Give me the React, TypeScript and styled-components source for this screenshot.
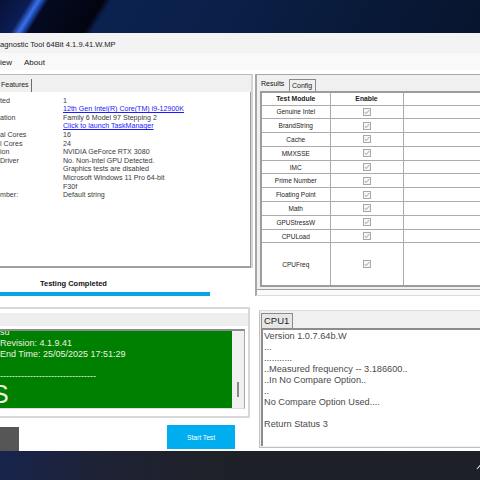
import styled, { createGlobalStyle } from "styled-components";

const GlobalStyle = createGlobalStyle`
  html, body {
    margin: 0;
    padding: 0;
  }
  body {
    width: 480px;
    height: 480px;
    overflow: hidden;
    font-family: "Liberation Sans", Arial, sans-serif;
    background: #1e2027;
  }
  * {
    box-sizing: border-box;
  }
`;

const info: { label: string; value: string; link?: boolean }[] = [
  { label: "ted", value: "1" },
  { label: "", value: "12th Gen Intel(R) Core(TM) i9-12900K", link: true },
  { label: "ation", value: "Family 6 Model 97 Stepping 2" },
  { label: "", value: "Click to launch  TaskManager", link: true },
  { label: "al Cores", value: "16" },
  { label: "l Cores", value: "24" },
  { label: "ion", value: "NVIDIA GeForce RTX 3080" },
  { label: "Driver", value: "No. Non-Intel GPU Detected." },
  { label: "", value: "Graphics tests are disabled" },
  { label: "", value: "Microsoft Windows 11 Pro 64-bit" },
  { label: "", value: "F30f" },
  { label: "mber:", value: "Default string" },
];

const modules = [
  "Genuine Intel",
  "BrandString",
  "Cache",
  "MMXSSE",
  "IMC",
  "Prime Number",
  "Floating Point",
  "Math",
  "GPUStressW",
  "CPULoad",
];

const cpuLog = [
  "Version 1.0.7.64b.W",
  "...",
  "...........",
  "..Measured frequency -- 3.186600..",
  "..In No Compare Option..",
  "..",
  "No Compare Option Used....",
  "\u00a0",
  "Return Status  3",
];

const CheckIcon = () => (
  <svg width="8" height="8" viewBox="0 0 8 8">
    <rect x="0.5" y="0.5" width="7" height="7" fill="#f6f6f6" stroke="#a8a8a8" />
    <polyline points="1.8,4 3.2,5.6 6.3,2" fill="none" stroke="#9a9a9a" strokeWidth="0.9" />
  </svg>
);

const App = () => {
  return (
    <Screen>
      <GlobalStyle />
      <Wallpaper />
      <Window>
        <TitleBar>agnostic Tool 64Bit 4.1.9.41.W.MP</TitleBar>
        <MenuBar>
          <MenuItem>iew</MenuItem>
          <MenuItem>About</MenuItem>
        </MenuBar>
        <Body>
          <LeftCol>
            <InfoPanel>
              <TabStrip>
                <Tab $w={32} $edge>
                  Features
                </Tab>
              </TabStrip>
              <InfoBody>
                <InfoGrid>
                  {info.map((row, i) => (
                    <InfoRow key={i}>
                      <span>{row.label}</span>
                      {row.link ? <InfoLink>{row.value}</InfoLink> : <span>{row.value}</span>}
                    </InfoRow>
                  ))}
                </InfoGrid>
              </InfoBody>
            </InfoPanel>
            <Status>
              <StatusText>Testing Completed</StatusText>
              <Progress />
            </Status>
            <LogBox>
              <LogHeader />
              <LogFrame>
                <GreenLog>
                  <LogLines>
                    <div>su</div>
                    <div>Revision: 4.1.9.41</div>
                    <div>End Time: 25/05/2025 17:51:29</div>
                    <div>&nbsp;</div>
                    <div>--------------------------------</div>
                  </LogLines>
                  <BigResult>S</BigResult>
                </GreenLog>
                <ScrollTrack>
                  <ScrollThumb />
                </ScrollTrack>
              </LogFrame>
            </LogBox>
            <ButtonRow>
              <DarkButton />
              <StartButton>Start Test</StartButton>
            </ButtonRow>
          </LeftCol>
          <RightCol>
            <ResultsPanel>
              <RTabStrip>
                <Tab $w={31} $active>
                  Results
                </Tab>
                <Tab $w={27} $boxed>
                  Config
                </Tab>
              </RTabStrip>
              <ResultsPage>
                <Table>
                  <colgroup>
                    <col style={{ width: 69 }} />
                    <col style={{ width: 73 }} />
                    <col style={{ width: 130 }} />
                  </colgroup>
                  <thead>
                    <tr>
                      <Th>Test Module</Th>
                      <Th>Enable</Th>
                      <Th />
                    </tr>
                  </thead>
                  <tbody>
                    {modules.map((m) => (
                      <Tr key={m}>
                        <Td>{m}</Td>
                        <Td>
                          <CheckIcon />
                        </Td>
                        <Td />
                      </Tr>
                    ))}
                    <Tr $tall>
                      <Td>CPUFreq</Td>
                      <Td>
                        <CheckIcon />
                      </Td>
                      <Td />
                    </Tr>
                  </tbody>
                </Table>
              </ResultsPage>
            </ResultsPanel>
            <CpuPanel>
              <CpuStrip>
                <CpuTab>CPU1</CpuTab>
              </CpuStrip>
              <CpuText>
                {cpuLog.map((l, i) => (
                  <div key={i}>{l}</div>
                ))}
              </CpuText>
            </CpuPanel>
          </RightCol>
        </Body>
      </Window>
      <Taskbar>
        <TrayChevron width="8" height="8" viewBox="0 0 8 8">
          <polyline points="1,6 4,2.5 7,6" fill="none" stroke="#e8e8e8" strokeWidth="1.1" />
        </TrayChevron>
      </Taskbar>
    </Screen>
  );
};

export default App;

const Screen = styled.div`
  width: 480px;
  height: 480px;
  display: flex;
  flex-direction: column;
  overflow: hidden;
`;

const Wallpaper = styled.div`
  height: 33px;
  flex-shrink: 0;
  background: linear-gradient(
    122deg,
    #081236 0px,
    #0c1c55 26px,
    #3a70ea 33px,
    #1d4bb5 36px,
    #050a22 41px,
    #02040f 88px,
    #0b2250 95px,
    #0b2048 200px,
    #091a3a 300px,
    #08152e 423px
  );
`;

const Window = styled.div`
  height: 418px;
  flex-shrink: 0;
  background: #ffffff;
  display: flex;
  flex-direction: column;
`;

const TitleBar = styled.div`
  height: 20px;
  background: #f3f3f3;
  display: flex;
  align-items: center;
  padding-top: 2px;
  font-size: 7.6px;
  color: #1a1a1a;
  white-space: nowrap;
`;

const MenuBar = styled.div`
  height: 17px;
  background: #f9f9f9;
  display: flex;
  align-items: center;
  gap: 12px;
  padding-top: 1px;
  font-size: 8px;
  color: #1a1a1a;
`;

const MenuItem = styled.span``;

const Body = styled.div`
  flex: 1;
  display: grid;
  grid-template-columns: 255px 225px;
  overflow: hidden;
`;

const LeftCol = styled.div`
  display: flex;
  flex-direction: column;
`;

const InfoPanel = styled.div`
  margin-top: 4px;
  height: 194px;
  width: 253px;
  border-top: 1px solid #b9b9b9;
  border-right: 2px solid #d4d4d4;
  background: #f0f0f0;
  display: flex;
  flex-direction: column;
`;

const TabStrip = styled.div`
  height: 17px;
  display: flex;
  align-items: flex-end;
`;

const Tab = styled.div<{ $w: number; $edge?: boolean; $active?: boolean; $boxed?: boolean }>`
  width: ${(p) => p.$w}px;
  height: 13px;
  font-size: 7px;
  line-height: 12px;
  padding-left: ${(p) => (p.$edge ? 1 : 3)}px;
  color: ${(p) => (p.$active ? "#111" : "#222")};
  white-space: nowrap;
  border-right: ${(p) => (p.$edge ? "1px solid #6e6e6e" : "none")};
  ${(p) =>
    p.$boxed &&
    `
    border: 1px solid #8a8a8a;
    border-bottom: none;
    height: 12px;
    line-height: 11px;
    padding-left: 2px;
  `}
`;

const InfoBody = styled.div`
  flex: 1;
  background: #ffffff;
  border-right: 1px solid #9a9a9a;
  border-bottom: 2px solid #a0a0a0;
`;

const InfoGrid = styled.div`
  padding-top: 4.7px;
  display: flex;
  flex-direction: column;
`;

const InfoRow = styled.div`
  display: grid;
  grid-template-columns: 63px 1fr;
  height: 8.6px;
  line-height: 8.6px;
  font-size: 7.1px;
  color: #3a3a3a;
  white-space: nowrap;
`;

const InfoLink = styled.span`
  color: #1a1aff;
  text-decoration: underline;
`;

const Status = styled.div`
  height: 39px;
  padding-top: 11px;
`;

const StatusText = styled.div`
  margin-left: 40px;
  font-size: 7.5px;
  line-height: 9px;
  font-weight: bold;
  color: #111;
`;

const Progress = styled.div`
  margin-top: 4px;
  width: 210px;
  height: 4px;
  background: #06a6e5;
`;

const LogBox = styled.div`
  height: 111px;
  width: 250px;
  border-top: 2px solid #d8d8d8;
  border-right: 2px solid #d8d8d8;
  border-bottom: 2px solid #d8d8d8;
  padding-top: 4px;
  display: flex;
  flex-direction: column;
`;

const LogHeader = styled.div`
  height: 13px;
  background: #eeeeee;
`;

const LogFrame = styled.div`
  margin-top: 3px;
  width: 245px;
  height: 80px;
  border-top: 2px solid #8c8c8c;
  border-right: 1px solid #a8a8a8;
  border-bottom: 1px solid #dedede;
  display: flex;
`;

const GreenLog = styled.div`
  flex: 1;
  background: #008000;
  overflow: hidden;
  color: #eef2e2;
`;

const LogLines = styled.div`
  margin-top: -4.3px;
  font-size: 9px;
  line-height: 11px;
  white-space: nowrap;
`;

const BigResult = styled.div`
  margin-left: -8px;
  font-size: 25px;
  line-height: 25px;
`;

const ScrollTrack = styled.div`
  width: 12px;
  background: #f0f0f0;
  display: flex;
  justify-content: center;
  padding-top: 51px;
`;

const ScrollThumb = styled.div`
  width: 2.5px;
  height: 15px;
  background: #8a8a8a;
`;

const ButtonRow = styled.div`
  flex: 1;
  display: flex;
  align-items: flex-start;
`;

const DarkButton = styled.div`
  width: 19px;
  height: 24px;
  margin-top: 9px;
  background: #565656;
`;

const StartButton = styled.button`
  margin-left: 148px;
  margin-top: 7px;
  width: 68px;
  height: 24px;
  border: none;
  background: #00adef;
  color: #ffffff;
  font-family: "Liberation Sans", Arial, sans-serif;
  font-size: 6.7px;
  padding: 0;
`;

const RightCol = styled.div`
  display: flex;
  flex-direction: column;
  overflow: hidden;
`;

const ResultsPanel = styled.div`
  margin-top: 4px;
  height: 222px;
  border-top: 1px solid #a6a6a6;
  border-left: 2px solid #a6a6a6;
  border-bottom: 1px solid #dcdcdc;
  background: #fafafa;
  display: flex;
  flex-direction: column;
`;

const RTabStrip = styled.div`
  height: 16px;
  background: #f0f0f0;
  display: flex;
  align-items: flex-end;
  padding-left: 1px;
`;

const ResultsPage = styled.div`
  height: 199px;
  background: #f0f0f0;
  border-bottom: 1px solid #a0a0a0;
  padding-left: 3px;
`;

const Table = styled.table`
  border-collapse: collapse;
  table-layout: fixed;
  width: 272px;
  height: 194px;
  border: 2px solid #9c9c9c;
  background: #ffffff;
`;

const Th = styled.th`
  height: 13px;
  padding: 0;
  border: 1px solid #ababab;
  font-size: 6.8px;
  font-weight: bold;
  color: #222;
  text-align: center;
`;

const Tr = styled.tr<{ $tall?: boolean }>`
  height: ${(p) => (p.$tall ? 43 : 13.8)}px;
`;

const Td = styled.td`
  padding: 0;
  border: 1px solid #ababab;
  font-size: 6.5px;
  color: #222;
  text-align: center;
  vertical-align: middle;
  white-space: nowrap;
  line-height: 0;

  & > svg {
    display: inline-block;
  }
  &:first-child {
    line-height: normal;
  }
`;

const CpuPanel = styled.div`
  margin-top: 14px;
  margin-left: 4px;
  height: 138px;
  border-top: 1px solid #dcdcdc;
  border-left: 1px solid #c0c0c0;
  border-bottom: 1px solid #c0c0c0;
  background: #f0f0f0;
  padding-left: 1px;
  display: flex;
  flex-direction: column;
`;

const CpuStrip = styled.div`
  height: 17px;
  display: flex;
  align-items: flex-end;
`;

const CpuTab = styled.div`
  width: 32px;
  height: 15px;
  border: 1px solid #8a8a8a;
  border-bottom: none;
  background: #e6e6e6;
  font-size: 9.5px;
  line-height: 13px;
  padding-left: 2px;
  color: #1e1e1e;
`;

const CpuText = styled.div`
  flex: 1;
  margin-bottom: 1px;
  border-top: 2px solid #8c8c8c;
  border-left: 2px solid #8c8c8c;
  background: #ffffff;
  padding: 0.5px 0 0 1px;
  font-size: 9.2px;
  line-height: 11.1px;
  color: #4a4a4a;
  white-space: nowrap;
  overflow: hidden;
`;

const Taskbar = styled.div`
  flex: 1;
  background: linear-gradient(90deg, #18244d 0px, #1d2236 90px, #1f2129 200px, #1e2027 100%);
  display: flex;
  justify-content: flex-end;
  align-items: flex-start;
  padding-top: 12px;
  overflow: hidden;
`;

const TrayChevron = styled.svg`
  flex-shrink: 0;
  margin-right: -4px;
`;
